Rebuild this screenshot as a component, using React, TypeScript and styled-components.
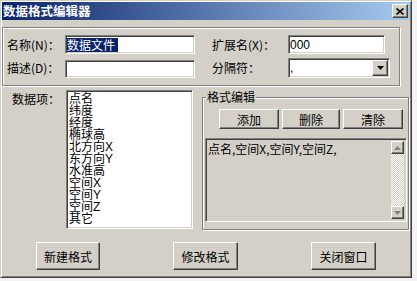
import React from 'react';
import styled, { createGlobalStyle, css } from 'styled-components';

const GlobalStyle = createGlobalStyle`
  html, body {
    margin: 0;
    padding: 0;
    background: #f3f3f3;
  }
  body {
    font-family: "Noto Sans CJK SC", "Liberation Sans", sans-serif;
    font-size: 12px;
    color: #000;
  }
`;

const face = '#d4d0c8';

const sunken = css`
  border: 1px solid;
  border-color: #808080 #fff #fff #808080;
  box-shadow: inset 1px 1px 0 #404040, inset -1px -1px 0 ${face};
`;

const raised = css`
  border: 1px solid;
  border-color: #fff #404040 #404040 #fff;
  box-shadow: inset -1px -1px 0 #808080;
`;

const Window = styled.div`
  box-sizing: border-box;
  width: 412px;
  height: 278px;
  background: ${face};
  border: 1px solid;
  border-color: ${face} #404040 #404040 ${face};
  box-shadow: inset 1px 1px 0 #fff, inset -1px -1px 0 #808080;
  padding: 1px;
  display: flex;
  flex-direction: column;
`;

const TitleBar = styled.div`
  flex: none;
  height: 18px;
  display: flex;
  align-items: center;
  justify-content: space-between;
  padding: 0 2px 0 1px;
  background: linear-gradient(to right, #0a246a, #a6caf0);
`;

const TitleText = styled.span`
  color: #fff;
  font-weight: bold;
  font-size: 12.5px;
  line-height: 14px;
`;

const CloseButton = styled.div`
  box-sizing: border-box;
  width: 16px;
  height: 14px;
  background: ${face};
  ${raised};
  display: flex;
  align-items: center;
  justify-content: center;
`;

const GroupBox = styled.div`
  box-sizing: border-box;
  border: 1px solid #808080;
  box-shadow: inset 1px 1px 0 #fff, 1px 1px 0 #fff;
`;

const TopGroup = styled(GroupBox)`
  margin-top: 7px;
  width: 398px;
  height: 59px;
  padding: 7px 0 0 4px;
  display: grid;
  grid-template-columns: 58px 147px 76px 102px;
  grid-template-rows: 19px 20px;
  row-gap: 4px;
  align-items: center;
`;

const Label = styled.span`
  line-height: 14px;
  white-space: nowrap;
`;

const Field = styled.div<{ $w: number; $h?: number; $end?: boolean }>`
  box-sizing: border-box;
  width: ${(p) => p.$w}px;
  height: ${(p) => p.$h ?? 19}px;
  align-self: ${(p) => (p.$end ? 'end' : 'center')};
  background: #fff;
  ${sunken};
  padding: 0 1px 0 1px;
  display: flex;
  align-items: center;
  font-family: "Liberation Sans", "Noto Sans CJK SC", sans-serif;
  font-size: 12px;
  line-height: 14px;
`;

const Selected = styled.span`
  background: #0a246a;
  color: #fff;
  font-family: "Noto Sans CJK SC", sans-serif;
  padding-right: 3px;
  line-height: 14px;
`;

const DropButton = styled.div`
  box-sizing: border-box;
  margin-left: auto;
  width: 16px;
  height: 16px;
  background: ${face};
  ${raised};
  display: flex;
  align-items: center;
  justify-content: center;
`;

const Middle = styled.div`
  display: flex;
  align-items: flex-start;
  margin-top: 4px;
  padding-left: 10px;
`;

const SideLabel = styled(Label)`
  width: 54px;
  margin-top: 2px;
`;

const ListBox = styled.div`
  box-sizing: border-box;
  width: 127px;
  height: 139px;
  background: #fff;
  ${sunken};
  padding: 2px 2px;
  font-family: "Liberation Sans", "Noto Sans CJK SC", sans-serif;
  line-height: 12px;
  overflow: hidden;
`;

const ListItem = styled.div`
  height: 12px;
  white-space: nowrap;
`;

const FormatGroup = styled(GroupBox)`
  margin: 7px 0 0 9px;
  width: 207px;
  height: 133px;
  display: flex;
  flex-direction: column;
`;

const Legend = styled.span`
  align-self: flex-start;
  margin: -8px 0 0 3px;
  padding: 0 1px;
  background: ${face};
  line-height: 14px;
`;

const ButtonRow = styled.div`
  display: flex;
  justify-content: flex-end;
  gap: 3px;
  margin-top: 5px;
  padding-right: 5px;
`;

const Button = styled.button<{ $w: number; $h: number }>`
  box-sizing: border-box;
  width: ${(p) => p.$w}px;
  height: ${(p) => p.$h}px;
  padding: 0;
  background: ${face};
  ${raised};
  font-family: "Noto Sans CJK SC", sans-serif;
  font-size: 12px;
  color: #000;
  display: flex;
  align-items: center;
  justify-content: center;
`;

const TextArea = styled.div`
  box-sizing: border-box;
  margin: 9px 1px 0 2px;
  height: 84px;
  ${sunken};
  padding: 2px;
  display: flex;
  background: ${face};
`;

const TextContent = styled.div`
  flex: 1;
  padding: 1px 0 0 0;
  line-height: 14px;
  white-space: nowrap;
  overflow: hidden;
`;

const ScrollBar = styled.div`
  width: 13px;
  display: flex;
  flex-direction: column;
`;

const ScrollButton = styled.div`
  box-sizing: border-box;
  height: 13px;
  background: ${face};
  ${raised};
  display: flex;
  align-items: center;
  justify-content: center;
`;

const ScrollTrack = styled.div`
  flex: 1;
  background: repeating-conic-gradient(#fff 0 25%, ${face} 0 50%) 0 0 / 2px 2px;
`;

const Footer = styled.div`
  display: flex;
  justify-content: space-between;
  margin-top: 12px;
  padding: 0 34px;
`;

const dataItems = ['点名', '纬度', '经度', '椭球高', '北方向X', '东方向Y', '水准高', '空间X', '空间Y', '空间Z', '其它'];

function Arrow({ up, color }: { up?: boolean; color: string }) {
  const pts = up ? '0,4 3.5,0 7,4' : '0,0 3.5,4 7,0';
  return (
    <svg width="7" height="4" viewBox="0 0 7 4">
      <polygon points={pts} fill={color} />
    </svg>
  );
}

export default function App() {
  return (
    <>
      <GlobalStyle />
      <Window>
        <TitleBar>
          <TitleText>数据格式编辑器</TitleText>
          <CloseButton>
            <svg width="8" height="7" viewBox="0 0 8 7">
              <path d="M0.5 0.5 L7.5 6.5 M7.5 0.5 L0.5 6.5" stroke="#000" strokeWidth="1.6" />
            </svg>
          </CloseButton>
        </TitleBar>

        <TopGroup>
          <Label>名称(N)：</Label>
          <Field $w={130}>
            <Selected>数据文件</Selected>
          </Field>
          <Label>扩展名(X)：</Label>
          <Field $w={97}>000</Field>

          <Label>描述(D)：</Label>
          <Field $w={130} $h={18} $end />
          <Label>分隔符：</Label>
          <Field $w={102} $h={20}>
            ,
            <DropButton>
              <Arrow color="#000" />
            </DropButton>
          </Field>
        </TopGroup>

        <Middle>
          <SideLabel>数据项：</SideLabel>
          <ListBox>
            {dataItems.map((item) => (
              <ListItem key={item}>{item}</ListItem>
            ))}
          </ListBox>
          <FormatGroup>
            <Legend>格式编辑</Legend>
            <ButtonRow>
              <Button $w={60} $h={20}>添加</Button>
              <Button $w={58} $h={20}>删除</Button>
              <Button $w={60} $h={20}>清除</Button>
            </ButtonRow>
            <TextArea>
              <TextContent>点名,空间X,空间Y,空间Z,</TextContent>
              <ScrollBar>
                <ScrollButton>
                  <Arrow up color="#808080" />
                </ScrollButton>
                <ScrollTrack />
                <ScrollButton>
                  <Arrow color="#808080" />
                </ScrollButton>
              </ScrollBar>
            </TextArea>
          </FormatGroup>
        </Middle>

        <Footer>
          <Button $w={64} $h={28}>新建格式</Button>
          <Button $w={65} $h={28}>修改格式</Button>
          <Button $w={65} $h={28}>关闭窗口</Button>
        </Footer>
      </Window>
    </>
  );
}
